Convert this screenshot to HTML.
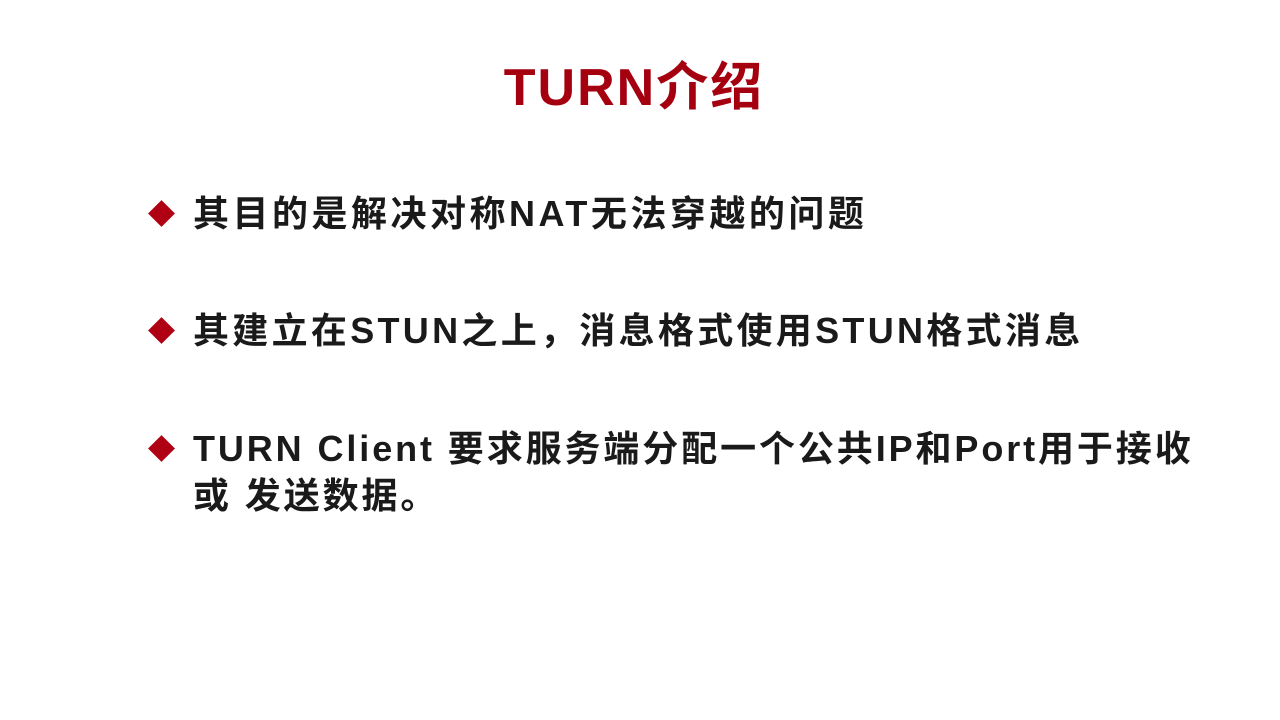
<!DOCTYPE html>
<html><head><meta charset="utf-8"><style>
html,body{margin:0;padding:0;background:#fff;width:1280px;height:720px;overflow:hidden}
body{position:relative;font-family:"Liberation Sans","Noto Sans CJK SC",sans-serif;font-weight:bold}
.t{position:absolute;left:0;width:1280px;text-align:center;top:52px;font-size:52px;color:#a50010;line-height:72px;letter-spacing:2px}
.l{position:absolute;left:193px;font-size:36px;color:#1a1a1a;white-space:nowrap;line-height:48px;letter-spacing:3.5px}
.d{position:absolute;left:152px;width:19px;height:19px;background:#b00014;transform:rotate(45deg)}
</style></head><body>
<div class="t" style="left:-6px">TURN介绍</div>
<div class="d" style="top:204px"></div>
<div class="l" style="top:190px">其目的是解决对称NAT无法穿越的问题</div>
<div class="d" style="top:321px"></div>
<div class="l" style="top:307px;letter-spacing:3.3px">其建立在STUN之上，消息格式使用STUN格式消息</div>
<div class="d" style="top:439px"></div>
<div class="l" style="top:425px;letter-spacing:2.9px">TURN Client 要求服务端分配一个公共IP和Port用于接收</div>
<div class="l" style="top:472px;letter-spacing:2.9px">或 发送数据。</div>
</body></html>
